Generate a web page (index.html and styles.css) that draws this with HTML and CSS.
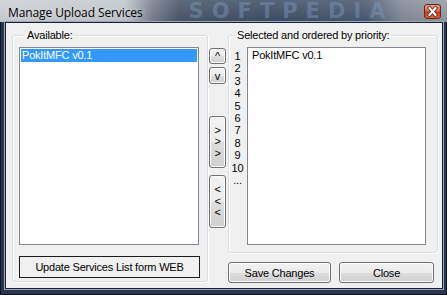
FILE: index.html
```html
<!DOCTYPE html>

<html>
    <head>
        <meta charset="utf-8">

        <link rel="stylesheet" href="styles.css">
    </head>

    <body>
        <div class="window">
            <div class="titlebar">
                <span class="title">Manage Upload Services</span>
                <span class="brand">SOFTPEDIA</span>
                <span class="close">
                    <svg width="17" height="15" viewBox="0 0 17 15">
                        <path d="M5.5 4 L11.5 11 M11.5 4 L5.5 11" stroke="#5a2418" stroke-width="3.6" stroke-linecap="square"/>
                        <path d="M5.5 4 L11.5 11 M11.5 4 L5.5 11" stroke="#ffffff" stroke-width="2" stroke-linecap="square"/>
                    </svg>
                </span>
            </div>

            <div class="client">
                <fieldset class="group left-group">
                    <legend>Available:</legend>

                    <div class="list left-list">
                        <div class="item selected">PokItMFC v0.1</div>
                    </div>

                    <button class="flat">Update Services List form WEB</button>
                </fieldset>

                <div class="movers">
                    <button class="btn small">^</button>
                    <button class="btn small down">v</button>
                    <button class="btn tall add">
                        <span>&gt;</span>
                        <span>&gt;</span>
                        <span>&gt;</span>
                    </button>
                    <button class="btn tall remove">
                        <span>&lt;</span>
                        <span>&lt;</span>
                        <span>&lt;</span>
                    </button>
                </div>

                <div class="right-col">
                    <fieldset class="group right-group">
                        <legend>Selected and ordered by priority:</legend>

                        <div class="rows">
                            <div class="numbers">
                                <div>1</div>
                                <div>2</div>
                                <div>3</div>
                                <div>4</div>
                                <div>5</div>
                                <div>6</div>
                                <div>7</div>
                                <div>8</div>
                                <div>9</div>
                                <div>10</div>
                                <div>...</div>
                            </div>

                            <div class="list right-list">
                                <div class="item">PokItMFC v0.1</div>
                            </div>
                        </div>
                    </fieldset>

                    <div class="actions">
                        <button class="btn save">Save Changes</button>
                        <button class="btn quit">Close</button>
                    </div>
                </div>
            </div>
        </div>
    </body>
</html>
```

FILE: styles.css
```css
body
{
    margin: 0;
    font-family: "Liberation Sans", Arial, sans-serif;
    font-size: 11px;
    letter-spacing: -0.2px;
}

.window
{
    width: 447px;
    height: 295px;
    display: flex;
    flex-direction: column;
    background: #2a3650;
    box-shadow: inset 0 0 0 1px #0c1220;
    overflow: hidden;
}

.titlebar
{
    height: 22px;
    flex-shrink: 0;
    display: flex;
    align-items: center;
    padding: 0 6px 0 8px;
    overflow: hidden;
    background:
        linear-gradient(rgba(255, 255, 255, 0.12), rgba(0, 0, 0, 0.05)),
        linear-gradient(to right, #cdd1d5 0, #c3c8cd 28%, #7a8290 34%, #4a566a 40%, #3f4e66 60%, #4a5a72 82%, #838c98 90%, #959ca5 100%);
}

.title
{
    font-family: "Open Sans", sans-serif;
    font-size: 12px;
    letter-spacing: -0.1px;
    color: #000;
    padding-top: 2px;
    white-space: nowrap;
    text-shadow: 0 0 6px rgba(255, 255, 255, 0.6);
}

.brand
{
    margin-left: 46px;
    font-family: "DejaVu Sans", sans-serif;
    font-weight: bold;
    font-size: 21px;
    line-height: 22px;
    letter-spacing: 8px;
    color: rgba(125, 155, 195, 0.45);
    white-space: nowrap;
}

.close
{
    margin-left: auto;
    align-self: flex-start;
    margin-top: 4px;
    width: 17px;
    height: 15px;
    border: 1px solid #6b2416;
    border-radius: 3px;
    box-sizing: border-box;
    background: linear-gradient(#eba08c 0, #d86a4e 45%, #c2401f 55%, #d9673e 100%);
    display: flex;
    align-items: center;
    justify-content: center;
    overflow: hidden;
}

.close svg
{
    flex-shrink: 0;
}

.client
{
    flex: 1;
    margin: 1px 5px 7px 6px;
    background: #f0f0f0;
    box-shadow: 0 0 0 1px #1b2232, 0 0 0 2px #9aa6b6;
    display: flex;
    align-items: flex-start;
    padding-top: 6px;
    overflow: hidden;
}

.group
{
    margin: 0;
    padding: 5px 0 0 0;
    border: 1px solid #d5dfe5;
    border-radius: 3px;
    box-shadow: inset 1px 1px 0 #ffffff, 1px 1px 0 #ffffff;
    min-width: 0;
}

.group legend
{
    margin-left: 6px;
    padding: 0 2px;
    line-height: 13px;
    color: #000;
}

.left-group
{
    margin-left: 6px;
    width: 196px;
    box-sizing: border-box;
    padding: 5px 0 3px 6px;
}

.list
{
    background: #fff;
    border: 1px solid #828790;
    padding: 1px;
    box-sizing: border-box;
}

.left-list
{
    width: 180px;
    height: 198px;
}

.item
{
    line-height: 13px;
    padding-left: 1px;
    white-space: nowrap;
}

.selected
{
    background: #3399ff;
    color: #fff;
}

.flat
{
    display: block;
    margin-top: 11px;
    width: 181px;
    height: 22px;
    border: 1px solid #1c1c1c;
    background: #f0f0f0;
    font-family: inherit;
    font-size: 11px;
    letter-spacing: -0.2px;
    color: #000;
    padding: 0;
}

.movers
{
    margin-left: 1px;
    width: 17px;
    padding-top: 19px;
    display: flex;
    flex-direction: column;
}

.btn
{
    border: 1px solid #707070;
    border-radius: 3px;
    background: linear-gradient(#f2f2f2 0, #ebebeb 50%, #dddddd 51%, #cfcfcf 100%);
    box-shadow: inset 0 0 0 1px #fbfbfb;
    font-family: inherit;
    font-size: 11px;
    letter-spacing: -0.2px;
    color: #000;
    padding: 0;
}

.small
{
    height: 16px;
    width: 17px;
    line-height: 12px;
}

.down
{
    margin-top: 3px;
    height: 17px;
}

.tall
{
    width: 17px;
    display: flex;
    flex-direction: column;
    align-items: center;
    justify-content: center;
    line-height: 11.5px;
}

.add
{
    margin-top: 32px;
    height: 52px;
}

.remove
{
    margin-top: 7px;
    height: 53px;
}

.right-col
{
    margin-left: 2px;
    width: 210px;
}

.right-group
{
    width: 210px;
    box-sizing: border-box;
    padding: 5px 11px 7px 0;
}

.rows
{
    display: flex;
    gap: 1px;
}

.numbers
{
    width: 17px;
    padding-top: 3px;
    text-align: center;
    line-height: 12.4px;
    color: #000;
}

.right-list
{
    width: 179px;
    height: 198px;
}

.right-list .item
{
    padding-left: 3px;
}

.actions
{
    margin-top: 9px;
    display: flex;
    gap: 8px;
}

.save
{
    width: 103px;
    height: 21px;
}

.quit
{
    width: 95px;
    height: 21px;
}
```
